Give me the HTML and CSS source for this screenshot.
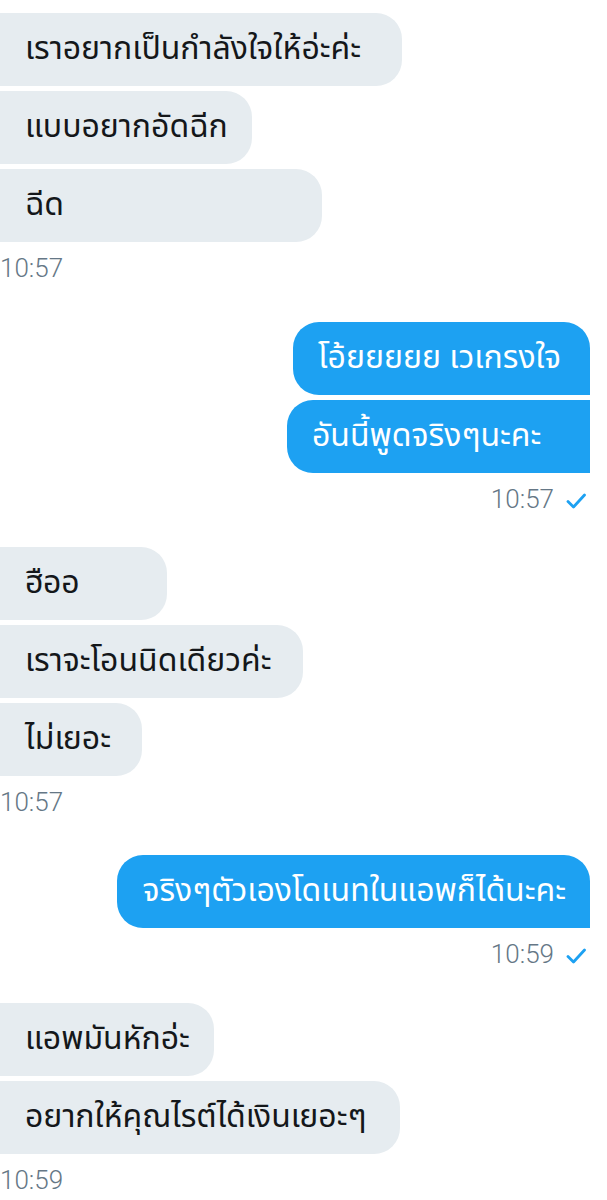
FILE: index.html
```html
<!DOCTYPE html>
<html lang="th">
<head>
<meta charset="utf-8">
<link rel="stylesheet" href="styles.css">
</head>
<body>
<main class="chat">
  <section class="group in g1">
    <div class="bubble w-402">เราอยากเป็นกำลังใจให้อ่ะค่ะ</div>
    <div class="bubble">แบบอยากอัดฉีก</div>
    <div class="bubble w-322">ฉีด</div>
    <div class="time">10:57</div>
  </section>
  <section class="group out g2">
    <div class="bubble first w-297">โอ้ยยยยย เวเกรงใจ</div>
    <div class="bubble w-303">อันนี้พูดจริงๆนะคะ</div>
    <div class="time">10:57 <svg class="check" viewBox="0 0 20 16" width="20" height="16"><polyline points="2,8.5 7.5,14 18.5,2" fill="none" stroke="#1da1f2" stroke-width="2.8" stroke-linecap="round" stroke-linejoin="round"/></svg></div>
  </section>
  <section class="group in g3">
    <div class="bubble w-167">ฮืออ</div>
    <div class="bubble w-303">เราจะโอนนิดเดียวค่ะ</div>
    <div class="bubble w-142">ไม่เยอะ</div>
    <div class="time">10:57</div>
  </section>
  <section class="group out g4">
    <div class="bubble first">จริงๆตัวเองโดเนทในแอพก็ได้นะคะ</div>
    <div class="time">10:59 <svg class="check" viewBox="0 0 20 16" width="20" height="16"><polyline points="2,8.5 7.5,14 18.5,2" fill="none" stroke="#1da1f2" stroke-width="2.8" stroke-linecap="round" stroke-linejoin="round"/></svg></div>
  </section>
  <section class="group in g5">
    <div class="bubble">แอพมันหักอ่ะ</div>
    <div class="bubble w-400">อยากให้คุณไรต์ได้เงินเยอะๆ</div>
    <div class="time">10:59</div>
  </section>
</main>
</body>
</html>
```

FILE: styles.css
```css
html, body {
  margin: 0;
  padding: 0;
  background: #ffffff;
}

body {
  width: 607px;
  height: 1200px;
  overflow: hidden;
  font-family: "Noto Sans Thai", "Noto Sans Thai UI", "Noto Sans", "Loma", "Garuda", sans-serif;
}

.chat {
  display: flex;
  flex-direction: column;
  padding: 13px 17px 0 0;
}

.group {
  display: flex;
  flex-direction: column;
  gap: 5px;
}

.group.in { align-items: flex-start; }
.group.out { align-items: flex-end; }

.g2 { margin-top: 39px; }
.g3 { margin-top: 33px; }
.g4 { margin-top: 38px; }
.g5 { margin-top: 34px; }

.bubble {
  box-sizing: border-box;
  font-size: 32px;
  line-height: 37px;
  padding: 18px 24px 18px 25px;
  white-space: nowrap;
}

.bubble.w-402 { min-width: 402px; }
.bubble.w-400 { min-width: 400px; }
.bubble.w-322 { min-width: 322px; }
.bubble.w-303 { min-width: 303px; }
.bubble.w-297 { min-width: 297px; }
.bubble.w-167 { min-width: 167px; }
.bubble.w-142 { min-width: 142px; }

.in .bubble {
  background: #e6ecf0;
  color: #14171a;
  border-radius: 0 26px 26px 0;
}

.out .bubble {
  background: #1da1f2;
  color: #ffffff;
  border-radius: 26px 0 0 26px;
}

.out .bubble.first {
  border-top-right-radius: 26px;
}

.time {
  display: flex;
  align-items: center;
  gap: 12px;
  margin-top: 6px;
  font-family: "Roboto", "Liberation Sans", sans-serif;
  font-weight: 300;
  font-size: 26px;
  line-height: 30px;
  color: #657786;
}

.out .time {
  margin-right: 4px;
}

.check {
  display: block;
  margin-top: 4px;
}
```
